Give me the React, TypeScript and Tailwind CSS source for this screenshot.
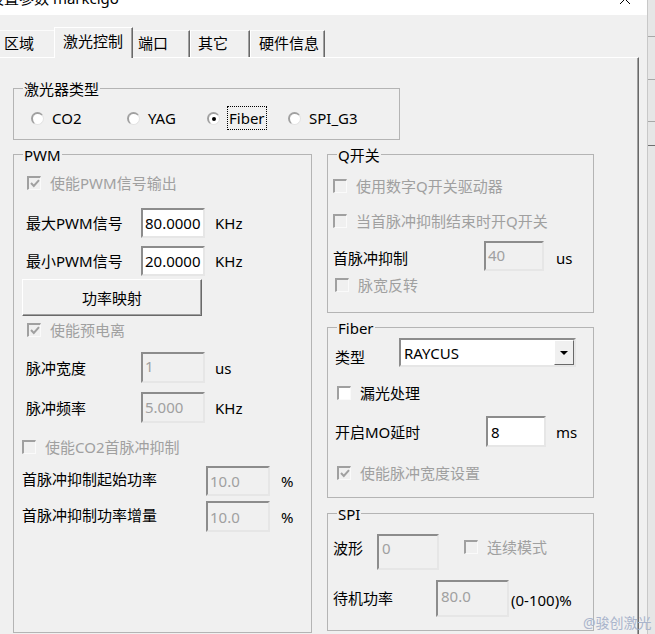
import React from "react";

type Props = { className?: string; children?: React.ReactNode };

function Group({ title, className = "", children }: Props & { title: string }) {
  return (
    <div className={`relative flex flex-col shrink-0 border border-[#b4b4b4] ${className}`}>
      <span className="absolute left-[9px] -top-[10px] bg-[#f0f0f0] px-[1px] leading-[20px]">{title}</span>
      {children}
    </div>
  );
}

function CheckBox({ label, checked = false, disabled = false, className = "" }: { label: string; checked?: boolean; disabled?: boolean; className?: string }) {
  return (
    <div className={`flex items-center gap-[9px] h-[20px] ${className}`}>
      <span
        className={`w-[14px] h-[14px] shrink-0 flex items-center justify-center border-t-2 border-l-2 border-r border-b border-t-[#a0a0a0] border-l-[#a0a0a0] border-r-[#fafafa] border-b-[#fafafa] ${disabled ? "bg-[#f0f0f0]" : "bg-white"}`}
      >
        {checked && (
          <svg width="10" height="9" viewBox="0 0 10 9">
            <path d="M1 4 L3.8 7 L9 1.2" fill="none" stroke={disabled ? "#a0a0a0" : "#000"} strokeWidth="2" />
          </svg>
        )}
      </span>
      <span className={disabled ? "text-[#a0a0a0]" : "text-black"}>{label}</span>
    </div>
  );
}

function Radio({ label, checked = false, focused = false, className = "" }: { label: string; checked?: boolean; focused?: boolean; className?: string }) {
  return (
    <div className={`flex items-center ${className}`}>
      <span className="w-[13px] h-[13px] shrink-0 rounded-full bg-white border-t-2 border-l-2 border-r border-b border-t-[#a0a0a0] border-l-[#a0a0a0] border-r-[#e3e3e3] border-b-[#e3e3e3] flex items-center justify-center">
        {checked && <span className="w-[4px] h-[4px] rounded-full bg-black" />}
      </span>
      {focused ? (
        <span className="ml-[7px] h-[24px] px-[1px] flex items-center border border-dotted border-black">{label}</span>
      ) : (
        <span className="ml-[8px]">{label}</span>
      )}
    </div>
  );
}

function Field({ value, disabled = false, className = "" }: { value: string; disabled?: boolean; className?: string }) {
  return (
    <div
      className={`shrink-0 flex px-[2px] border-2 border-t-[#8c8c8c] border-l-[#8c8c8c] border-r-[#e6e6e6] border-b-[#e6e6e6] ${disabled ? "bg-[#f0f0f0] text-[#a0a0a0]" : "bg-white text-black"} ${className}`}
    >
      {value}
    </div>
  );
}

const tabBase = "h-[27px] pt-[2px] border-t border-t-[#fbfbfb] shrink-0";

export default function App() {
  return (
    <div className="relative w-[655px] h-[634px] overflow-hidden flex bg-[#f0f0f0] text-[15px] leading-[20px] text-black font-['Noto_Sans','Noto_Sans_CJK_SC',sans-serif]">
      <div className="w-[647px] h-full flex flex-col shrink-0">
        {/* Title bar */}
        <div className="h-[15px] shrink-0 bg-white overflow-hidden flex justify-between">
          <div className="-ml-[11px] -mt-[12px] whitespace-nowrap">设置参数 markcigo</div>
          <svg className="mr-[16px] -mt-[7px] shrink-0" width="12" height="12" viewBox="0 0 12 12">
            <path d="M1 1L11 11M11 1L1 11" stroke="#000" strokeWidth="1" />
          </svg>
        </div>

        {/* Tabs */}
        <div className="h-[42px] shrink-0 flex items-end">
          <div className={`${tabBase} w-[54px] pl-[4px]`}>区域</div>
          <div className="relative z-10 -mb-[1px] w-[79px] h-[31px] shrink-0 pl-[8px] pt-[3px] bg-[#f0f0f0] border-t border-l border-t-white border-l-white border-r border-r-[#696969] shadow-[inset_-1px_0_0_#a0a0a0]">
            激光控制
          </div>
          <div className={`${tabBase} w-[57px] pl-[5px] border-r border-r-[#696969] shadow-[inset_-1px_0_0_#a0a0a0]`}>端口</div>
          <div className={`${tabBase} w-[60px] pl-[7px] border-l border-l-white border-r border-r-[#696969] shadow-[inset_-1px_0_0_#a0a0a0]`}>其它</div>
          <div className={`${tabBase} w-[75px] pl-[8px] border-l border-l-white border-r border-r-[#696969] shadow-[inset_-1px_0_0_#a0a0a0]`}>硬件信息</div>
        </div>

        {/* Tab panel */}
        <div className="relative w-[639px] flex-1 flex flex-col pl-[13px] pt-[30px] border-t border-t-white border-r border-r-[#696969] shadow-[inset_-1px_0_0_#a0a0a0]">
          <Group title="激光器类型" className="w-[387px] h-[52px]">
            <div className="flex items-center h-[24px] mt-[17px] ml-[17px]">
              <Radio label="CO2" className="w-[96px]" />
              <Radio label="YAG" className="w-[80px]" />
              <Radio label="Fiber" checked focused className="w-[81px]" />
              <Radio label="SPI_G3" />
            </div>
          </Group>

          <div className="flex gap-[15px] mt-[14px]">
            {/* PWM */}
            <Group title="PWM" className="w-[299px] h-[479px]">
              <CheckBox label="使能PWM信号输出" checked disabled className="mt-[18px] ml-[13px]" />
              <div className="flex items-center mt-[15px] ml-[12px]">
                <span className="w-[115px] shrink-0">最大PWM信号</span>
                <Field value="80.0000" className="w-[64px] h-[30px] items-center" />
                <span className="ml-[10px]">KHz</span>
              </div>
              <div className="flex items-center mt-[8px] ml-[12px]">
                <span className="w-[115px] shrink-0">最小PWM信号</span>
                <Field value="20.0000" className="w-[64px] h-[30px] items-center" />
                <span className="ml-[10px]">KHz</span>
              </div>
              <button className="mt-[3px] ml-[8px] w-[180px] h-[37px] flex items-center justify-center bg-[#f0f0f0] border border-t-white border-l-white border-r-[#696969] border-b-[#696969] shadow-[inset_-1px_-1px_0_#a0a0a0]">
                功率映射
              </button>
              <CheckBox label="使能预电离" checked disabled className="mt-[4px] ml-[13px]" />
              <div className="flex items-center mt-[12px] ml-[12px]">
                <span className="w-[115px] shrink-0">脉冲宽度</span>
                <Field value="1" disabled className="w-[64px] h-[31px] items-center pb-[3px]" />
                <span className="ml-[10px]">us</span>
              </div>
              <div className="flex items-center mt-[9px] ml-[12px]">
                <span className="w-[115px] shrink-0">脉冲频率</span>
                <Field value="5.000" disabled className="w-[64px] h-[31px] items-center pb-[2px]" />
                <span className="ml-[10px]">KHz</span>
              </div>
              <CheckBox label="使能CO2首脉冲抑制" disabled className="mt-[14px] ml-[8px]" />
              <div className="flex items-center mt-[9px] ml-[8px]">
                <span className="w-[184px] shrink-0 pb-[4px]">首脉冲抑制起始功率</span>
                <Field value="10.0" disabled className="w-[64px] h-[30px] items-center" />
                <span className="ml-[11px]">%</span>
              </div>
              <div className="flex items-center mt-[5px] ml-[8px]">
                <span className="w-[184px] shrink-0 pb-[4px]">首脉冲抑制功率增量</span>
                <Field value="10.0" disabled className="w-[64px] h-[31px] items-center" />
                <span className="ml-[11px]">%</span>
              </div>
            </Group>

            <div className="w-[267px] flex flex-col shrink-0">
              {/* Q switch */}
              <Group title="Q开关" className="w-[267px] h-[159px]">
                <CheckBox label="使用数字Q开关驱动器" disabled className="mt-[21px] ml-[5px]" />
                <CheckBox label="当首脉冲抑制结束时开Q开关" disabled className="mt-[15px] ml-[5px]" />
                <div className="flex items-center mt-[10px] ml-[5px]">
                  <span className="w-[151px] shrink-0 pt-[3px]">首脉冲抑制</span>
                  <Field value="40" disabled className="w-[60px] h-[30px] items-start pt-[2px]" />
                  <span className="ml-[12px] pt-[4px]">us</span>
                </div>
                <CheckBox label="脉宽反转" disabled className="mt-[4px] ml-[7px]" />
              </Group>

              {/* Fiber */}
              <Group title="Fiber" className="w-[267px] h-[171px] mt-[14px]">
                <div className="flex items-center mt-[10px] ml-[7px]">
                  <span className="w-[64px] shrink-0 pt-[9px]">类型</span>
                  <div className="w-[177px] h-[29px] shrink-0 flex bg-white border-2 border-t-[#8c8c8c] border-l-[#8c8c8c] border-r-[#e6e6e6] border-b-[#e6e6e6]">
                    <span className="flex-1 pl-[3px] pt-[3px]">RAYCUS</span>
                    <span className="w-[20px] h-full flex items-center justify-center bg-[#f0f0f0] border border-t-white border-l-white border-r-[#696969] border-b-[#696969]">
                      <svg width="8" height="4" viewBox="0 0 8 4">
                        <path d="M0 0H8L4 4Z" fill="#000" />
                      </svg>
                    </span>
                  </div>
                </div>
                <CheckBox label="漏光处理" className="mt-[16px] ml-[9px]" />
                <div className="flex items-center mt-[13px] ml-[7px]">
                  <span className="w-[151px] shrink-0">开启MO延时</span>
                  <Field value="8" className="w-[60px] h-[31px] items-center pl-[3px]" />
                  <span className="ml-[10px]">ms</span>
                </div>
                <CheckBox label="使能脉冲宽度设置" checked disabled className="mt-[16px] ml-[9px]" />
              </Group>

              {/* SPI */}
              <Group title="SPI" className="w-[267px] h-[118px] mt-[15px]">
                <div className="flex items-start mt-[20px] ml-[5px]">
                  <span className="w-[44px] shrink-0 mt-[4px]">波形</span>
                  <Field value="0" disabled className="w-[62px] h-[36px] items-start pt-[2px] pl-[3px]" />
                  <CheckBox label="连续模式" disabled className="ml-[25px] mt-[3px]" />
                </div>
                <div className="flex items-start mt-[10px] ml-[5px]">
                  <span className="w-[103px] shrink-0 mt-[8px]">待机功率</span>
                  <Field value="80.0" disabled className="w-[73px] h-[37px] items-start pt-[4px] pl-[3px]" />
                  <span className="ml-[2px] mt-[10px]">(0-100)%</span>
                </div>
              </Group>
            </div>
          </div>
        </div>
      </div>

      {/* Neighbouring window edge */}
      <div className="w-[8px] h-full shrink-0 flex flex-col bg-[#e6e6e6] border-l border-l-[#c8c8c8]">
        <div className="h-[37px] border-b border-b-[#a8a8a8]" />
        <div className="h-[43px] border-b border-b-[#a8a8a8]" />
        <div className="h-[42px] border-b border-b-[#a8a8a8]" />
        <div className="h-[24px] border-b border-b-[#707070]" />
      </div>

      {/* Watermark */}
      <span className="absolute left-[583px] top-[613px] text-[14px] leading-[20px] text-[#aab5cc] whitespace-nowrap">@骏创激光</span>
    </div>
  );
}
